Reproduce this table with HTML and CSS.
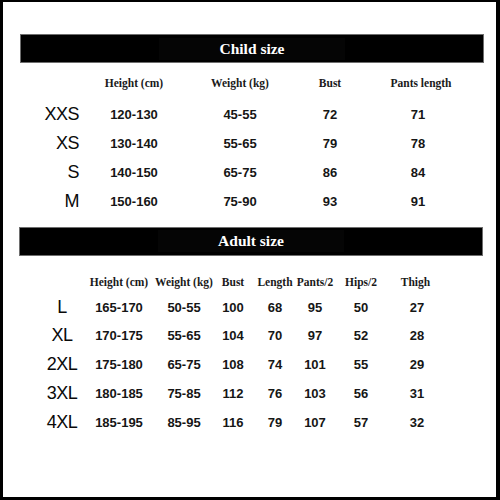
FILE: index.html
```html
<!DOCTYPE html>
<html>
<head>
<meta charset="utf-8">
<link rel="stylesheet" href="styles.css">
</head>
<body>
<div class="sheet">
  <div class="bar bar-child"><span class="bar-title">Child size</span></div>
  <div class="table child">
    <div class="hd"></div>
    <div class="hd">Height (cm)</div>
    <div class="hd">Weight (kg)</div>
    <div class="hd">Bust</div>
    <div class="hd hd-pants">Pants length</div>

    <div class="size">XXS</div><div class="num">120-130</div><div class="num">45-55</div><div class="num">72</div><div class="num">71</div>
    <div class="size">XS</div><div class="num">130-140</div><div class="num">55-65</div><div class="num">79</div><div class="num">78</div>
    <div class="size">S</div><div class="num">140-150</div><div class="num">65-75</div><div class="num">86</div><div class="num">84</div>
    <div class="size">M</div><div class="num">150-160</div><div class="num">75-90</div><div class="num">93</div><div class="num">91</div>
  </div>

  <div class="bar bar-adult"><span class="bar-title">Adult size</span></div>
  <div class="table adult">
    <div class="hd"></div>
    <div class="hd">Height (cm)</div>
    <div class="hd">Weight (kg)</div>
    <div class="hd">Bust</div>
    <div class="hd">Length</div>
    <div class="hd">Pants/2</div>
    <div class="hd">Hips/2</div>
    <div class="hd hd-thigh">Thigh</div>

    <div class="size">L</div><div class="num">165-170</div><div class="num">50-55</div><div class="num">100</div><div class="num">68</div><div class="num">95</div><div class="num">50</div><div class="num">27</div>
    <div class="size">XL</div><div class="num">170-175</div><div class="num">55-65</div><div class="num">104</div><div class="num">70</div><div class="num">97</div><div class="num">52</div><div class="num">28</div>
    <div class="size">2XL</div><div class="num">175-180</div><div class="num">65-75</div><div class="num">108</div><div class="num">74</div><div class="num">101</div><div class="num">55</div><div class="num">29</div>
    <div class="size">3XL</div><div class="num">180-185</div><div class="num">75-85</div><div class="num">112</div><div class="num">76</div><div class="num">103</div><div class="num">56</div><div class="num">31</div>
    <div class="size">4XL</div><div class="num">185-195</div><div class="num">85-95</div><div class="num">116</div><div class="num">79</div><div class="num">107</div><div class="num">57</div><div class="num">32</div>
  </div>
</div>
</body>
</html>
```

FILE: styles.css
```css
html, body {
  margin: 0;
  padding: 0;
  background: #fff;
}

.sheet {
  box-sizing: border-box;
  width: 500px;
  height: 500px;
  border: 3px solid #000;
  border-top-width: 2px;
  border-right-width: 4px;
  padding-top: 32px;
  background: #fff;
  color: #111;
}

.bar {
  box-sizing: border-box;
  height: 29px;
  width: 464px;
  background: #000;
  border: 1px solid #6e6e6e;
  display: flex;
  align-items: center;
  justify-content: center;
}

.bar-child {
  margin-left: 17px;
}

.bar-adult {
  margin-left: 16px;
  margin-top: 11px;
}

.bar-title {
  color: #fff;
  font-family: "Liberation Serif", "Times New Roman", serif;
  font-weight: bold;
  font-size: 15.5px;
  line-height: 22px;
  padding: 0 60px;
  background: #050505;
}

.table {
  display: grid;
  align-items: center;
}

.table > div {
  display: flex;
  justify-content: center;
  white-space: nowrap;
}

.child {
  margin-left: 37px;
  margin-top: 9px;
  grid-template-columns: 39px 110px 102px 78px 98px;
  grid-template-rows: 28.5px repeat(4, 28.8px);
}

.child .hd {
  align-self: start;
  line-height: 22px;
}

.adult {
  margin-left: 39px;
  margin-top: 15px;
  grid-template-columns: 40px 74px 56px 42px 42px 38px 54px 58px;
  grid-template-rows: 22px repeat(5, 28.8px);
}

.hd {
  font-family: "Liberation Serif", "Times New Roman", serif;
  font-weight: bold;
  font-size: 11.5px;
  color: #1a1a1a;
}

.child .hd-pants {
  padding-left: 6px;
}

.adult .hd-thigh {
  padding-right: 3px;
}

.num {
  font-family: "Liberation Sans", Arial, sans-serif;
  font-weight: bold;
  font-size: 13px;
  color: #161616;
}

.size {
  font-family: "Liberation Sans", Arial, sans-serif;
  font-size: 18px;
  color: #0a0a0a;
  letter-spacing: -0.5px;
}

.child .size {
  justify-content: flex-end !important;
}
```
